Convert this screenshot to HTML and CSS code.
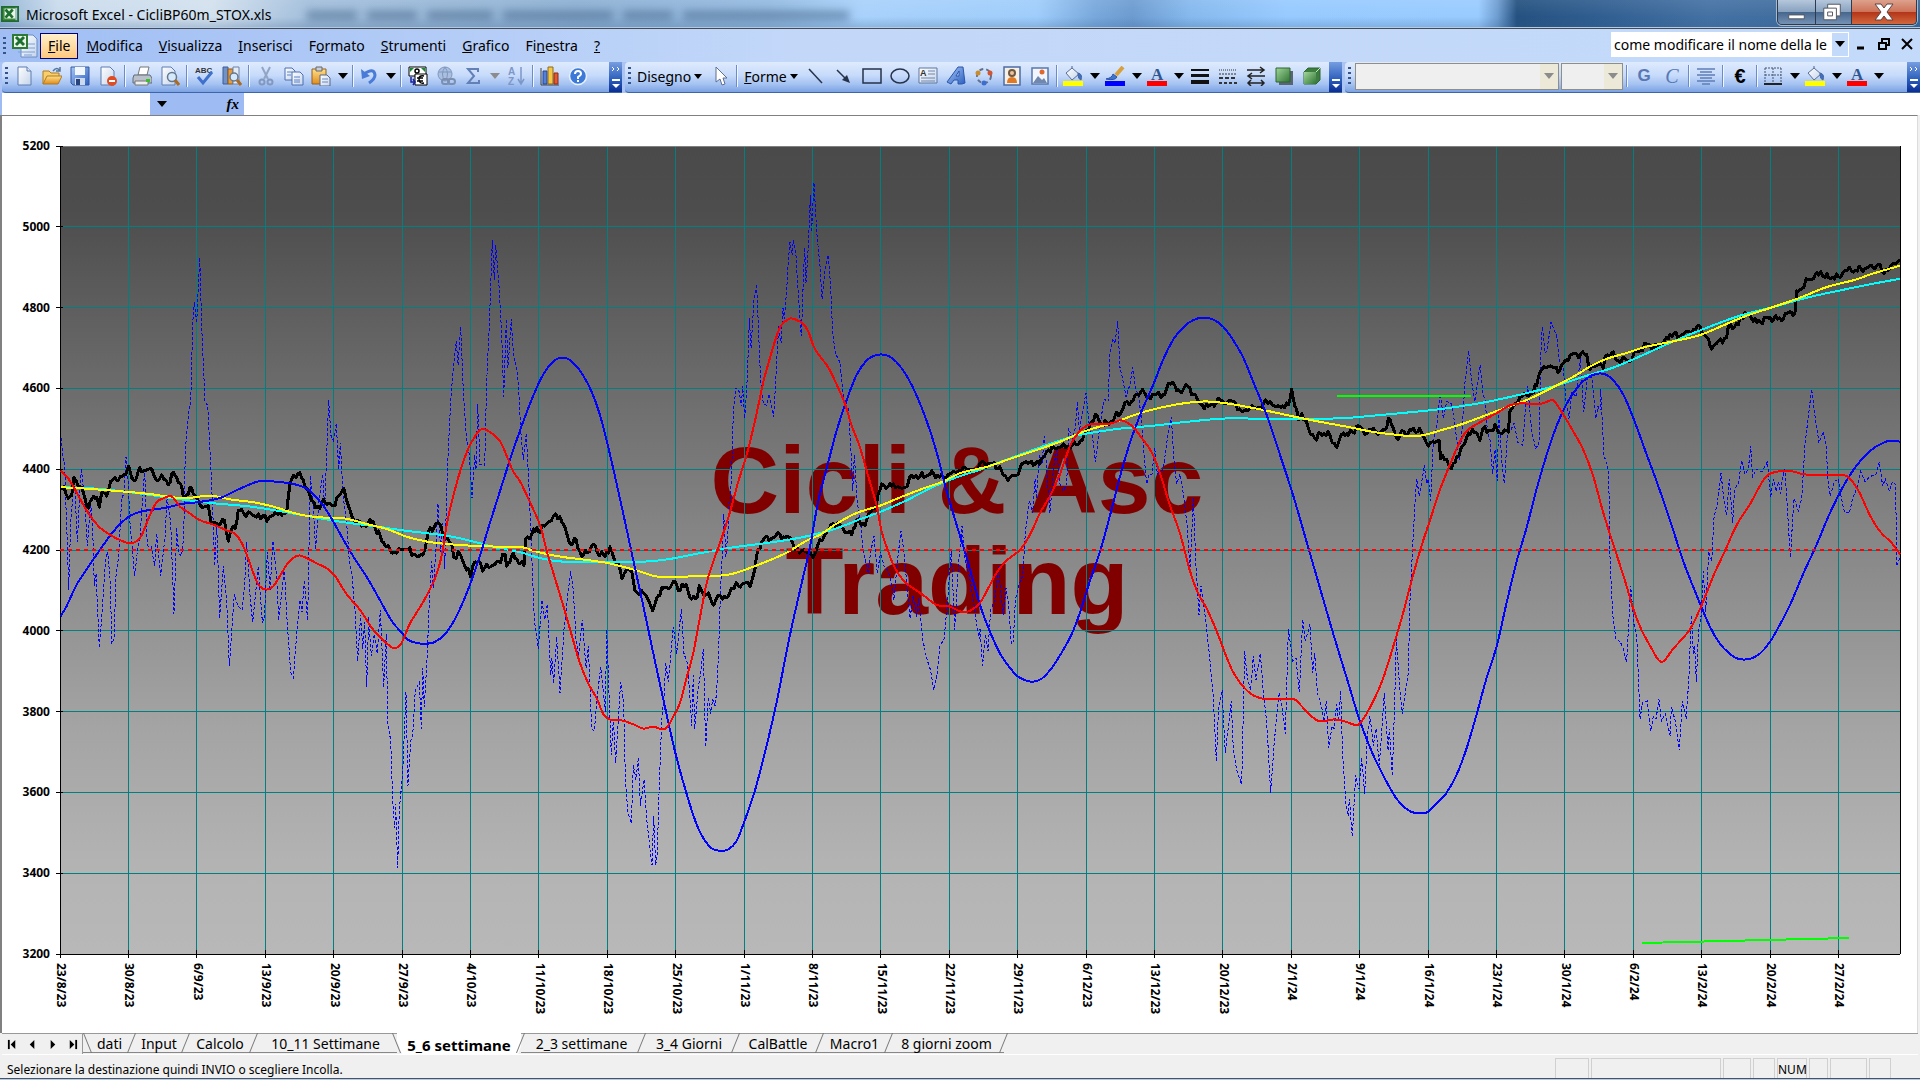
FILE: index.html
```html
<!DOCTYPE html>
<html lang="it">
<head>
<meta charset="utf-8">
<title>Microsoft Excel - CicliBP60m_STOX.xls</title>
<link rel="stylesheet" href="styles.css">
</head>
<body>
<svg class="defs" aria-hidden="true">
  <defs>
    <linearGradient id="paper" x1="0" y1="0" x2="1" y2="1"><stop offset="0" stop-color="#fff"/><stop offset="1" stop-color="#c4d4ea"/></linearGradient>
    <linearGradient id="gold" x1="0" y1="0" x2="0" y2="1"><stop offset="0" stop-color="#ffe08a"/><stop offset="1" stop-color="#e08c1c"/></linearGradient>
    <linearGradient id="blue" x1="0" y1="0" x2="1" y2="1"><stop offset="0" stop-color="#a9c8f6"/><stop offset="1" stop-color="#2c5fc0"/></linearGradient>
    <linearGradient id="green" x1="0" y1="0" x2="1" y2="1"><stop offset="0" stop-color="#a2d69a"/><stop offset="1" stop-color="#2f7434"/></linearGradient>
  </defs>
  <symbol id="i-excel" viewBox="0 0 20 20"><path d="M1 2 16 1v17L1 19z" fill="#3d8a3f"/><path d="M1 2h18v16H1z" fill="none" stroke="#1f6a2c" stroke-width="2"/><path d="M4 4h12v11H4z" fill="#e9f3e6"/><path d="m5 5 8 9M13 5l-8 9" stroke="#1c7030" stroke-width="3"/></symbol>
  <symbol id="i-book" viewBox="0 0 26 26"><path d="M9 2h12l4 4v18H9z" fill="url(#paper)" stroke="#6b8bc0"/><path d="M12 11h11M12 15h11M6 19h17M12 22h8" stroke="#7d9fd8"/><path d="M1 2h14v13H1z" fill="#e9f3e6" stroke="#2c7a35" stroke-width="2"/><path d="m4 4 8 8M12 4l-8 8" stroke="#1c7030" stroke-width="3"/></symbol>
  <symbol id="i-new" viewBox="0 0 20 20"><path d="M4 1h9l4 4v14H4z" fill="url(#paper)" stroke="#5e7cb0"/><path d="M13 1v4h4" fill="#dce8fa" stroke="#5e7cb0"/></symbol>
  <symbol id="i-open" viewBox="0 0 20 20"><path d="M1 18V5h6l2 2h8v4" fill="#f8cf6b" stroke="#b27a1d"/><path d="m1 18 4-8h15l-4 8z" fill="url(#gold)" stroke="#b27a1d"/><path d="M11 5q4-5 7 0m0-4v4h-4" fill="none" stroke="#56779f" stroke-width="1.5"/></symbol>
  <symbol id="i-save" viewBox="0 0 20 20"><path d="M1 1h18v18H3l-2-2z" fill="url(#blue)" stroke="#3459a5"/><path d="M5 1h10v8H5z" fill="#f2f6fd"/><path d="M5 12h10v7H5z" fill="#cdd9ee"/><path d="M6 13h4v6H6z" fill="#29437d"/></symbol>
  <symbol id="i-perm" viewBox="0 0 20 20"><path d="M3 1h9l4 4v14H3z" fill="url(#paper)" stroke="#5e7cb0"/><circle cx="14" cy="15" r="5" fill="#df4b22"/><path d="M11 15h6" stroke="#fff" stroke-width="2"/></symbol>
  <symbol id="i-print" viewBox="0 0 20 20"><path d="M6 9 8 1h9l-2 8z" fill="#fff" stroke="#777"/><path d="M2 9h16l2 3v5H1v-5z" fill="#b9c0ca" stroke="#636b78"/><path d="M3 15h13v4H3z" fill="#eee" stroke="#777"/><path d="M14 13h4v3h-4z" fill="#3bbf30"/></symbol>
  <symbol id="i-preview" viewBox="0 0 20 20"><path d="M2 1h9l4 4v14H2z" fill="url(#paper)" stroke="#5e7cb0"/><circle cx="12" cy="11" r="4.500" fill="#d4e9fb" stroke="#65778d" stroke-width="1.500"/><path d="m15 14 4 5" stroke="#ad6b22" stroke-width="3"/></symbol>
  <symbol id="i-research" viewBox="0 0 20 20"><path d="M1 1h5v17H1z" fill="#6f92cb" stroke="#3c5c96"/><path d="M6 3h5v15H6z" fill="#e69b3c" stroke="#8e5a1b"/><path d="M11 1h6v17h-6z" fill="#e3ebf7" stroke="#6d82a6"/><circle cx="12" cy="11" r="4" fill="#d4e9fb" stroke="#65778d" stroke-width="1.500"/><path d="m15 14 4 5" stroke="#ad6b22" stroke-width="3"/></symbol>
  <symbol id="i-cut" viewBox="0 0 20 20"><path d="m6 1 6 12M14 1 8 13" stroke="#93a5c4" stroke-width="2"/><circle cx="6" cy="16" r="2.500" fill="none" stroke="#8398bf" stroke-width="2"/><circle cx="14" cy="16" r="2.500" fill="none" stroke="#8398bf" stroke-width="2"/></symbol>
  <symbol id="i-copy" viewBox="0 0 20 20"><path d="M1 2h7l3 3v9H1z" fill="url(#paper)" stroke="#4c6eb0"/><path d="M8 6h8l3 3v10H8z" fill="url(#paper)" stroke="#4c6eb0"/><path d="M3 6h5M3 9h4M10 11h6M10 14h6M10 16h6" stroke="#5c82cc"/></symbol>
  <symbol id="i-paste" viewBox="0 0 20 20"><path d="M1 3h14v15H1z" fill="url(#gold)" stroke="#946022"/><path d="M5 1h6v4H5z" fill="#c9ced8" stroke="#666"/><path d="M9 9h7l3 3v8H9z" fill="url(#paper)" stroke="#56688c"/><path d="M11 13h6M11 16h6" stroke="#6a88c4"/></symbol>
  <symbol id="i-undo" viewBox="0 0 20 20"><path d="M5 8q10-7 11 1 0 4-6 8" fill="none" stroke="#4a7bd6" stroke-width="3"/><path d="m2 3 1 10 8-3z" fill="#4a7bd6"/></symbol>
  <symbol id="i-euroconv" viewBox="0 0 20 20"><path d="M1 1h17v9H1z" fill="#fff" stroke="#000"/><path d="M2 2h4L2 6zM17 2h-4l4 4z" fill="#168a30"/><circle cx="9" cy="5" r="2" fill="none" stroke="#000" stroke-width="1.500"/><path d="M7 8h12v11H7z" fill="#fff" stroke="#000"/><path d="M16 10q-5-1-5 3 0 5 5 4M9 12h6M9 15h6" fill="none" stroke="#000" stroke-width="1.500"/><path d="M3 11v5h4m-2-3 2 3-2 3" fill="none" stroke="#1a20a0" stroke-width="1.500"/></symbol>
  <symbol id="i-link" viewBox="0 0 20 20"><circle cx="9" cy="8" r="7" fill="#abc0e0" stroke="#7f97bf"/><path d="M3 6h12M9 1q-5 7 0 14M9 1q5 7 0 14" fill="none" stroke="#7f97bf"/><rect x="6" y="13" width="7" height="5" rx="2.500" fill="none" stroke="#7c8fb0" stroke-width="2"/><rect x="12" y="13" width="7" height="5" rx="2.500" fill="none" stroke="#7c8fb0" stroke-width="2"/></symbol>
  <symbol id="i-sigma" viewBox="0 0 20 20"><path d="M15 6V3H5l6 7-6 7h11v-3" fill="none" stroke="#6280b6" stroke-width="2"/></symbol>
  <symbol id="i-chart" viewBox="0 0 20 20"><path d="M1 2v17h18" stroke="#444" fill="none"/><path d="M3 5h4v13H3z" fill="#5580d8" stroke="#24458f"/><path d="M8 1h5v17H8z" fill="#f3c844" stroke="#93691a"/><path d="M14 7h4v11h-4z" fill="#e05a33" stroke="#8b2a14"/></symbol>
  <symbol id="i-help" viewBox="0 0 20 20"><circle cx="10" cy="10" r="8.500" fill="#3d79d8" stroke="#e8f1fe" stroke-width="1.500"/><path d="M7 8q0-3 3-3t3 3q0 1-3 3v2" fill="none" stroke="#fff" stroke-width="2"/><path d="M9 14h2v2H9z" fill="#fff"/></symbol>
  <symbol id="i-cursor" viewBox="0 0 20 20"><path d="M6 1v15l4-3 2 6 3-1-2-6h4z" fill="#fff" stroke="#5d6f92"/></symbol>
  <symbol id="i-line" viewBox="0 0 20 20"><path d="m3 3 13 14" stroke="#26324a" stroke-width="1.500"/></symbol>
  <symbol id="i-arrow" viewBox="0 0 20 20"><path d="m3 4 9 9" stroke="#26324a" stroke-width="1.500"/><path d="m16 17-8-3 5-5z" fill="#26324a"/></symbol>
  <symbol id="i-rect" viewBox="0 0 20 20"><path d="M1 3h18v14H1z" fill="none" stroke="#26324a" stroke-width="1.500"/></symbol>
  <symbol id="i-ellipse" viewBox="0 0 20 20"><ellipse cx="10" cy="10" rx="9" ry="7" fill="none" stroke="#26324a" stroke-width="1.500"/></symbol>
  <symbol id="i-wordart" viewBox="0 0 20 20"><path d="m1 16 11-15h5l2 16-3 1h-4v-4H8l-3 4zM10 10h3V5z" fill="url(#blue)" stroke="#2a56ad" fill-rule="evenodd"/></symbol>
  <symbol id="i-diagram" viewBox="0 0 20 20"><circle cx="10" cy="10" r="7" fill="none" stroke="#62708b" stroke-width="2" stroke-dasharray="4 3"/><circle cx="4" cy="7" r="2.500" fill="#cb8d27"/><circle cx="16" cy="7" r="2.500" fill="#d6532d"/><circle cx="10" cy="17" r="2.500" fill="#3d6dd0"/></symbol>
  <symbol id="i-clip" viewBox="0 0 20 20"><path d="M2 1h16v18H2z" fill="#f6efe2" stroke="#4e6ca5" stroke-width="1.500"/><circle cx="10" cy="7" r="4" fill="#6d5844"/><circle cx="10" cy="7" r="2" fill="#edc29c"/><path d="M5 17q0-6 5-6t5 6z" fill="#df7926"/></symbol>
  <symbol id="i-picture" viewBox="0 0 20 20"><path d="M2 2h16v16H2z" fill="#f1f6fe" stroke="#5877ad" stroke-width="1.500"/><circle cx="12" cy="6" r="2.500" fill="#dd6930"/><path d="m3 17 5-7 4 4 2-2 3 5z" fill="#7088ad"/></symbol>
  <symbol id="i-fill" viewBox="0 0 20 20"><path d="m3 7 6-5 7 6-7 6z" fill="url(#paper)" stroke="#5a6f94"/><path d="M9 2V0M15 7q5 1 3 7-3-1-3-5z" fill="#3d6fc6" stroke="#49679b"/><path d="M0 15h20v5H0z" fill="#ff0"/></symbol>
  <symbol id="i-brush" viewBox="0 0 20 20"><path d="m18 1-7 8" stroke="#d8a03c" stroke-width="4"/><path d="M1 13q6-1 7-5l4 3q-2 4-11 2z" fill="#3e74d0" stroke="#2c54a0"/><path d="M0 15h20v5H0z" fill="#00f"/></symbol>
  <symbol id="i-weights" viewBox="0 0 20 20"><path d="M1 4h18" stroke="#111" stroke-width="2"/><path d="M1 9.500h18" stroke="#111" stroke-width="3"/><path d="M1 16h18" stroke="#111" stroke-width="4"/></symbol>
  <symbol id="i-dashes" viewBox="0 0 20 20"><path d="M1 4h18" stroke="#333" stroke-dasharray="1 1"/><path d="M1 8h18" stroke="#333" stroke-dasharray="2 1"/><path d="M1 12h18" stroke="#333" stroke-width="2" stroke-dasharray="4 2"/><path d="M1 17h18" stroke="#333" stroke-width="2" stroke-dasharray="3 2"/></symbol>
  <symbol id="i-arrows" viewBox="0 0 20 20"><path d="M1 4h17M2 10h17M2 17h16M14 1l4 3-4 3M6 7l-4 3 4 3M5 14l-3 3 3 3M15 14l3 3-3 3" fill="none" stroke="#222" stroke-width="1.500"/></symbol>
  <symbol id="i-shadow" viewBox="0 0 20 20"><path d="M5 5h14v14H5z" fill="#5a6574"/><path d="M2 2h14v14H2z" fill="url(#green)" stroke="#2c6630"/></symbol>
  <symbol id="i-3d" viewBox="0 0 20 20"><path d="m2 6 4-4h12v12l-4 4H2z" fill="#3d7d3f" stroke="#2c6630"/><path d="M2 6h12v12H2z" fill="url(#green)"/><path d="m14 6 4-4" stroke="#c3e8be"/></symbol>
  <symbol id="i-center" viewBox="0 0 20 20"><path d="M1 3h18M4 6h12M1 9h18M4 12h12M1 15h18M6 18h8" stroke="#5f7db6" stroke-width="1.500"/></symbol>
  <symbol id="i-borders" viewBox="0 0 20 20"><path d="M2 2h16M2 9h16M2 2v16M10 2v16M18 2v16" stroke="#44536e" stroke-dasharray="2 1"/><path d="M1 18h18" stroke="#222" stroke-width="2"/></symbol>
</svg>

<header class="titlebar">
  <svg class="app-icon"><use href="#i-excel"/></svg>
  <h1 class="title">Microsoft Excel - CicliBP60m_STOX.xls</h1>
  <div class="ghost" aria-hidden="true"><i></i><i></i><i></i><i></i><i></i><i></i></div>
  <div class="window-buttons">
    <button aria-label="Riduci a icona"><svg viewBox="0 0 38 25"><path d="M11 15h16v4H11z" fill="#fff" stroke="#53565f"/></svg></button>
    <button aria-label="Ripristina"><svg viewBox="0 0 36 25"><path d="M12 4h13v12h-4v4H8V8h4z" fill="#fff" stroke="#53565f"/><path d="M12 12h5v4h-5zM12 8h9v8" fill="none" stroke="#53565f"/></svg></button>
    <button class="close" aria-label="Chiudi"><svg viewBox="0 0 64 25"><path d="M23 4h6l3 4 3-4h6l-6 8 6 8h-6l-3-4-3 4h-6l6-8z" fill="#fff" stroke="#5b4444"/></svg></button>
  </div>
</header>

<nav class="menubar" aria-label="Menu">
  <span class="grip"></span>
  <svg class="book-icon"><use href="#i-book"/></svg>
  <button class="menu menu-active"><u>F</u>ile</button>
  <button class="menu"><u>M</u>odifica</button>
  <button class="menu"><u>V</u>isualizza</button>
  <button class="menu"><u>I</u>nserisci</button>
  <button class="menu">F<u>o</u>rmato</button>
  <button class="menu"><u>S</u>trumenti</button>
  <button class="menu"><u>G</u>rafico</button>
  <button class="menu">Fi<u>n</u>estra</button>
  <button class="menu"><u>?</u></button>
  <div class="question">
    <input type="text" aria-label="Digitare una domanda" value="come modificare il nome della le">
    <button aria-label="Domande recenti"><span class="caret"></span></button>
  </div>
  <div class="doc-buttons">
    <button aria-label="Riduci finestra"><svg viewBox="0 0 12 12"><path d="M2 10h7" stroke="#000" stroke-width="3"/></svg></button>
    <button aria-label="Ripristina finestra"><svg viewBox="0 0 12 12"><path d="M4 4V1h7v6H8" fill="none" stroke="#000" stroke-width="2"/><path d="M1 5h7v6H1z" fill="none" stroke="#000" stroke-width="2"/></svg></button>
    <button aria-label="Chiudi finestra"><svg viewBox="0 0 12 12"><path d="m1 1 10 10M11 1 1 11" stroke="#000" stroke-width="2"/></svg></button>
  </div>
</nav>

<div class="toolbars">
  <div class="toolbar toolbar-standard" role="toolbar" aria-label="Standard">
    <span class="grip"></span>
    <button class="tool" aria-label="Nuovo"><svg><use href="#i-new"/></svg></button>
    <button class="tool" aria-label="Apri"><svg><use href="#i-open"/></svg></button>
    <button class="tool" aria-label="Salva"><svg><use href="#i-save"/></svg></button>
    <button class="tool" aria-label="Autorizzazioni"><svg><use href="#i-perm"/></svg></button>
    <span class="sep"></span>
    <button class="tool" aria-label="Stampa"><svg><use href="#i-print"/></svg></button>
    <button class="tool" aria-label="Anteprima di stampa"><svg><use href="#i-preview"/></svg></button>
    <span class="sep"></span>
    <button class="tool" aria-label="Controllo ortografia"><svg viewBox="0 0 20 20"><text class="abc" x="1" y="7">ABC</text><path d="m4 11 5 6 9-11" fill="none" stroke="#3e70cc" stroke-width="3"/></svg></button>
    <button class="tool" aria-label="Ricerche"><svg><use href="#i-research"/></svg></button>
    <span class="sep"></span>
    <button class="tool" aria-label="Taglia"><svg><use href="#i-cut"/></svg></button>
    <button class="tool" aria-label="Copia"><svg><use href="#i-copy"/></svg></button>
    <button class="tool split" aria-label="Incolla"><svg><use href="#i-paste"/></svg><span class="caret"></span></button>
    <span class="sep"></span>
    <button class="tool split" aria-label="Annulla"><svg><use href="#i-undo"/></svg><span class="caret"></span></button>
    <span class="sep"></span>
    <button class="tool" aria-label="Conversione in euro"><svg><use href="#i-euroconv"/></svg></button>
    <button class="tool" aria-label="Collegamento ipertestuale"><svg><use href="#i-link"/></svg></button>
    <button class="tool split" aria-label="Somma automatica"><svg><use href="#i-sigma"/></svg><span class="caret caret-dim"></span></button>
    <button class="tool" aria-label="Ordinamento crescente"><svg viewBox="0 0 20 20"><text class="az" x="2" y="9">A</text><text class="az" x="2" y="19">Z</text><path d="M15 1v16m-3-4 3 5 3-5" fill="none" stroke="#7d97c8" stroke-width="1.5"/></svg></button>
    <span class="sep"></span>
    <button class="tool" aria-label="Creazione guidata grafico"><svg><use href="#i-chart"/></svg></button>
    <button class="tool" aria-label="Guida"><svg><use href="#i-help"/></svg></button>
    <button class="overflow" aria-label="Opzioni barra Standard"><svg viewBox="0 0 13 30"><path d="m3 5 2 2-2 2m5-4 2 2-2 2" fill="none" stroke="#fff"/><path d="M3 18h8" stroke="#fff" stroke-width="2"/><path d="M3 22h8l-4 4z" fill="#fff"/></svg></button>
  </div>
  <div class="toolbar toolbar-drawing" role="toolbar" aria-label="Disegno">
    <span class="grip"></span>
    <button class="label-tool"><span>Dise<u>g</u>no</span><span class="caret caret-small"></span></button>
    <button class="tool" aria-label="Seleziona oggetti"><svg><use href="#i-cursor"/></svg></button>
    <span class="sep"></span>
    <button class="label-tool"><span><u>F</u>orme</span><span class="caret caret-small"></span></button>
    <button class="tool" aria-label="Linea"><svg><use href="#i-line"/></svg></button>
    <button class="tool" aria-label="Freccia"><svg><use href="#i-arrow"/></svg></button>
    <button class="tool" aria-label="Rettangolo"><svg><use href="#i-rect"/></svg></button>
    <button class="tool" aria-label="Ovale"><svg><use href="#i-ellipse"/></svg></button>
    <button class="tool" aria-label="Casella di testo"><svg viewBox="0 0 20 20"><path d="M1 2h18v15H1z" fill="url(#paper)" stroke="#60769f"/><text class="box-a" x="2" y="10">A</text><path d="M10 5h7M10 8h7M3 12h14M3 15h14" stroke="#7185ab"/></svg></button>
    <button class="tool" aria-label="Inserisci WordArt"><svg><use href="#i-wordart"/></svg></button>
    <button class="tool" aria-label="Inserisci diagramma"><svg><use href="#i-diagram"/></svg></button>
    <button class="tool" aria-label="Inserisci ClipArt"><svg><use href="#i-clip"/></svg></button>
    <button class="tool" aria-label="Inserisci immagine"><svg><use href="#i-picture"/></svg></button>
    <span class="sep"></span>
    <button class="tool split" aria-label="Colore riempimento"><svg><use href="#i-fill"/></svg><span class="caret"></span></button>
    <button class="tool split" aria-label="Colore linea"><svg><use href="#i-brush"/></svg><span class="caret"></span></button>
    <button class="tool split" aria-label="Colore carattere"><svg viewBox="0 0 20 20"><text class="font-a" x="4" y="14">A</text><path d="M0 15h20v5H0z" fill="red"/></svg><span class="caret"></span></button>
    <button class="tool" aria-label="Stile linea"><svg><use href="#i-weights"/></svg></button>
    <button class="tool" aria-label="Stile tratteggio"><svg><use href="#i-dashes"/></svg></button>
    <button class="tool" aria-label="Stile freccia"><svg><use href="#i-arrows"/></svg></button>
    <button class="tool" aria-label="Stile ombreggiatura"><svg><use href="#i-shadow"/></svg></button>
    <button class="tool" aria-label="Stile 3D"><svg><use href="#i-3d"/></svg></button>
    <button class="overflow" aria-label="Opzioni barra Disegno"><svg viewBox="0 0 13 30"><path d="M3 18h8" stroke="#fff" stroke-width="2"/><path d="M3 22h8l-4 4z" fill="#fff"/></svg></button>
  </div>
  <div class="toolbar toolbar-format" role="toolbar" aria-label="Formattazione">
    <span class="grip"></span>
    <span class="combo combo-font"><select aria-label="Tipo di carattere" disabled></select><span class="combo-arrow"><span class="caret caret-dim"></span></span></span>
    <span class="combo combo-size"><select aria-label="Dimensione carattere" disabled></select><span class="combo-arrow"><span class="caret caret-dim"></span></span></span>
    <span class="sep"></span>
    <button class="tool letter" aria-label="Grassetto">G</button>
    <button class="tool letter italic" aria-label="Corsivo">C</button>
    <span class="sep"></span>
    <button class="tool" aria-label="Allinea al centro"><svg><use href="#i-center"/></svg></button>
    <span class="sep"></span>
    <button class="tool letter euro" aria-label="Euro">€</button>
    <span class="sep"></span>
    <button class="tool split" aria-label="Bordi"><svg><use href="#i-borders"/></svg><span class="caret"></span></button>
    <button class="tool split" aria-label="Colore riempimento celle"><svg><use href="#i-fill"/></svg><span class="caret"></span></button>
    <button class="tool split" aria-label="Colore testo"><svg viewBox="0 0 20 20"><text class="font-a" x="4" y="14">A</text><path d="M0 15h20v5H0z" fill="red"/></svg><span class="caret"></span></button>
    <button class="overflow" aria-label="Opzioni barra Formattazione"><svg viewBox="0 0 13 30"><path d="m3 5 2 2-2 2m5-4 2 2-2 2" fill="none" stroke="#fff"/><path d="M3 18h8" stroke="#fff" stroke-width="2"/><path d="M3 22h8l-4 4z" fill="#fff"/></svg></button>
  </div>
</div>

<div class="formula-bar">
  <input class="name-box" type="text" aria-label="Casella nome">
  <button class="name-arrow" aria-label="Elenco nomi"><span class="caret"></span></button>
  <button class="fx" aria-label="Inserisci funzione">fx</button>
  <input class="formula" type="text" aria-label="Barra della formula">
</div>

<main class="chart">
  <ol class="y-labels">
    <li>5200</li><li>5000</li><li>4800</li><li>4600</li><li>4400</li><li>4200</li><li>4000</li><li>3800</li><li>3600</li><li>3400</li><li>3200</li>
  </ol>
  <div class="plot">
    <p class="watermark">Cicli &amp; Asc<br>Trading</p>
    <svg class="series" id="series" viewBox="0 0 1840 808" preserveAspectRatio="none" role="img" aria-label="Cicli EuroStoxx 60 minuti"></svg>
  </div>
  <ol class="x-labels">
    <li><span>23/8/23</span></li><li><span>30/8/23</span></li><li><span>6/9/23</span></li><li><span>13/9/23</span></li><li><span>20/9/23</span></li><li><span>27/9/23</span></li><li><span>4/10/23</span></li><li><span>11/10/23</span></li><li><span>18/10/23</span></li><li><span>25/10/23</span></li><li><span>1/11/23</span></li><li><span>8/11/23</span></li><li><span>15/11/23</span></li><li><span>22/11/23</span></li><li><span>29/11/23</span></li><li><span>6/12/23</span></li><li><span>13/12/23</span></li><li><span>20/12/23</span></li><li><span>2/1/24</span></li><li><span>9/1/24</span></li><li><span>16/1/24</span></li><li><span>23/1/24</span></li><li><span>30/1/24</span></li><li><span>6/2/24</span></li><li><span>13/2/24</span></li><li><span>20/2/24</span></li><li><span>27/2/24</span></li>
  </ol>
</main>

<nav class="sheets" aria-label="Fogli">
  <div class="sheet-nav">
    <button aria-label="Primo foglio"><svg viewBox="0 0 12 12"><path d="M2 1v10" stroke="#000" stroke-width="2"/><path d="M9 1v10L4 6z"/></svg></button>
    <button aria-label="Foglio precedente"><svg viewBox="0 0 12 12"><path d="M8 1v10L3 6z"/></svg></button>
    <button aria-label="Foglio successivo"><svg viewBox="0 0 12 12"><path d="M4 1v10l5-5z"/></svg></button>
    <button aria-label="Ultimo foglio"><svg viewBox="0 0 12 12"><path d="M10 1v10" stroke="#000" stroke-width="2"/><path d="M3 1v10l5-5z"/></svg></button>
  </div>
  <div class="tabs">
    <button class="tab tab-first">dati</button>
    <button class="tab">Input</button>
    <button class="tab">Calcolo</button>
    <button class="tab tab-before">10_11 Settimane</button>
    <button class="tab tab-active">5_6 settimane</button>
    <button class="tab">2_3 settimane</button>
    <button class="tab">3_4 Giorni</button>
    <button class="tab">CalBattle</button>
    <button class="tab">Macro1</button>
    <button class="tab">8 giorni zoom</button>
  </div>
</nav>

<footer class="status">
  <span class="status-text">Selezionare la destinazione quindi INVIO o scegliere Incolla.</span>
  <div class="panels"><span></span><span></span><span></span><span></span><span>NUM</span><span></span><span></span><span></span></div>
</footer>
<div class="taskbar"></div>
<script src="chart.js"></script>
</body>
</html>
```

FILE: styles.css
```css
* { box-sizing: border-box; }
body {
  margin: 0;
  min-height: 100vh;
  display: flex;
  flex-direction: column;
  background: #f0f0f0;
  color: #000;
  font-family: "Noto Sans", "Liberation Sans", sans-serif;
  font-size: 14px;
  overflow-x: hidden;
}
button, input, select { font: inherit; color: inherit; margin: 0; padding: 0; border: 0; background: none; border-radius: 0; }
button { display: flex; align-items: center; justify-content: center; }
ol { list-style: none; margin: 0; padding: 0; }
.defs { position: absolute; width: 0; height: 0; }

/* Title bar */
.titlebar {
  display: flex;
  align-items: flex-start;
  height: 29px;
  padding: 0 3px 0 1px;
  border-bottom: 1px solid #444b55;
  box-shadow: inset 0 -1px #b5cbe2;
  background:
    linear-gradient(rgba(255,255,255,.08), rgba(255,255,255,0) 60%, rgba(50,90,140,.25)),
    linear-gradient(90deg, #93b4d6 0, #c9dbec 3%, #d3e1ee 11%, #a3bfdc 16%, #8db0d3 30%, #93bae0 40%, #a8d1fb 45%, #9fcdfb 54%, #78a8dc 57%, #6c9bd0 59%, #86b9ee 62%, #97caff 67%, #99cbff 77%, #6d9cd0 78%, #245180 79%, #2f5d8f 83%, #4471a3 89%, #3a6798 100%);
}
.app-icon { width: 18px; height: 20px; margin-top: 4px; }
.title { margin: 0 0 0 7px; font-size: 14px; font-weight: 400; line-height: 29px; white-space: nowrap; }
.ghost { display: flex; gap: 10px; margin: 11px 0 0 36px; filter: blur(4px); }
.ghost i { height: 9px; background: #47688c; opacity: .6; }
.ghost i:nth-child(1) { width: 50px; }
.ghost i:nth-child(2) { width: 50px; }
.ghost i:nth-child(3) { width: 66px; }
.ghost i:nth-child(4) { width: 110px; }
.ghost i:nth-child(5) { width: 50px; }
.ghost i:nth-child(6) { width: 166px; }
.window-buttons { display: flex; height: 25px; margin-left: auto; border: 1px solid #2d3b4c; border-top: 0; border-radius: 0 0 5px 5px; overflow: hidden; box-shadow: 0 0 0 1px #a5bad0; }
.window-buttons button { width: 38px; background: linear-gradient(#b5c7db, #89a3c0 48%, #46658c 50%, #7592b4); border-right: 1px solid #2d3b4c; }
.window-buttons button + button { width: 36px; }
.window-buttons .close { width: 64px; border: 0; background: linear-gradient(#dda18c, #cd7359 48%, #b23418 50%, #d2673d); }
.window-buttons svg { width: 100%; height: 25px; }

/* Menu bar */
.menubar { display: flex; align-items: center; height: 33px; padding: 0 7px 0 3px; background: linear-gradient(90deg, #a0bef4, #c3d8f9 42%, #c4dafa); }
.grip { width: 3px; height: 18px; flex: none; background: repeating-linear-gradient(#35548c 0 2px, transparent 2px 5px); }
.book-icon { width: 26px; height: 26px; margin: 0 2px 0 6px; }
.menu { height: 26px; padding: 0 8px; white-space: nowrap; }
.menu-active { border: 1px solid #000080; padding: 0 7px; background: linear-gradient(#fff0ca, #ffc87e); }
.question { display: flex; width: 238px; height: 25px; margin: 0 0 3px auto; border: 1px solid #fff; background: #fff; }
.question input { flex: 1; min-width: 0; padding-left: 2px; }
.question button { width: 16px; background: #c4dafa; }
.doc-buttons { display: flex; gap: 11px; margin: 0 0 3px 6px; }
.doc-buttons svg { width: 12px; height: 12px; }

/* Toolbars */
.toolbars { display: grid; grid-template-columns: 620px 717px 1fr; gap: 3px; height: 31px; padding-left: 2px; background: #a9c4f5; }
.toolbar { display: flex; align-items: center; min-width: 0; padding: 0 0 2px 3px; border-bottom: 1px solid #3c65aa; border-radius: 4px 0 0 4px; background: linear-gradient(#dfebfd, #c6dafa 45%, #a3c1f1 75%, #7ba2e3); }
.toolbar .grip { margin-right: 2px; }
.toolbar-format .grip { margin-right: 4px; }
.tool { width: 28px; height: 26px; flex: none; }
.tool svg { width: 20px; height: 20px; flex: none; }
.split { width: 42px; gap: 7px; justify-content: flex-start; padding-left: 3px; }
.sep { width: 6px; height: 22px; flex: none; background: linear-gradient(90deg, transparent 2px, #6a8ccb 2px 3px, #f2f7ff 3px 4px, transparent 4px); }
.caret { width: 0; height: 0; flex: none; border: 5px solid transparent; border-top: 6px solid #000; border-bottom: 0; }
.caret-small { border-width: 4px; border-top-width: 5px; border-bottom: 0; }
.caret-dim { border-top-color: #8c8c8c; }
.label-tool { flex: none; gap: 3px; height: 26px; padding: 0 4px; }
.abc { font: 700 8px "Liberation Sans", sans-serif; fill: #333; }
.az { font: 700 10px "Liberation Sans", sans-serif; fill: #7d97c8; }
.box-a { font: 700 9px "Liberation Sans", sans-serif; fill: #333; }
.font-a { font: 700 17px "Liberation Serif", serif; fill: #31568f; }
.tool svg:has(.font-a) { overflow: visible; }
.overflow { width: 13px; height: 30px; margin: 0 0 -2px auto; flex: none; background: linear-gradient(#769de0, #2a5dbb 60%, #0a2f93); }
.overflow svg { width: 13px; height: 30px; }
.combo { display: flex; height: 27px; flex: none; border: 1px solid #8f8f88; background: #efefef; }
.combo select { flex: 1; min-width: 0; appearance: none; }
.combo-arrow { display: flex; align-items: center; justify-content: center; width: 18px; background: #ece9d8; }
.combo-font { width: 204px; }
.combo-size { width: 62px; margin: 0 1px 0 2px; }
.letter { font-family: "Liberation Sans", sans-serif; font-size: 17px; font-weight: 700; color: #5878b4; }
.italic { font-family: "Liberation Serif", serif; font-style: italic; font-size: 20px; font-weight: 400; }
.euro { color: #000; font-size: 20px; }

/* Formula bar */
.formula-bar { display: flex; height: 22px; padding-left: 2px; background: #9ebcf3; }
.name-box { width: 148px; background: #fff; }
.name-arrow { width: 24px; }
.fx { width: 70px; justify-content: flex-end; padding-right: 5px; font-family: "Liberation Serif", serif; font-style: italic; font-weight: 700; font-size: 15px; }
.formula { flex: 1; min-width: 0; background: #fff; }

/* Chart sheet */
.chart {
  flex: 1;
  display: grid;
  grid-template-columns: 58px 1fr 17px;
  grid-template-rows: 30px 1fr 79px;
  margin-right: 2px;
  border: solid #808080;
  border-width: 1px 1px 0 2px;
  border-right-color: #dcdcdc;
  background: #fff;
}
.y-labels { grid-area: 2 / 1; display: flex; flex-direction: column; justify-content: space-between; padding-right: 10px; text-align: right; font-size: 12px; font-weight: 700; }
.y-labels li { height: 0; line-height: 0; }
.plot { grid-area: 2 / 2; display: grid; min-height: 0; background: linear-gradient(#4a4a4a, #4d4d4d 8%, #5e5e5e 20%, #888 50%, #a4a4a4 72%, #b4b4b4 90%, #b8b8b8); }
.watermark { grid-area: 1 / 1; place-self: center; margin: 0; padding: 0 46px 38px 0; color: #800000; font-family: "Liberation Sans", sans-serif; font-size: 95px; font-weight: 700; line-height: 101px; text-align: center; }
.series { grid-area: 1 / 1; width: 100%; height: 100%; min-height: 0; overflow: visible; }
.series * { fill: none; vector-effect: non-scaling-stroke; shape-rendering: crispEdges; }
.grid-line { stroke: #008080; }
.axis { stroke: #000; }
.frame-top { stroke: #808080; }
.series .level { stroke: #f00; stroke-width: 2px; stroke-dasharray: 4 4; shape-rendering: auto; }
.oscillator { stroke: #00f; stroke-width: 1px; stroke-dasharray: 3 2; }
.price { stroke: #000; stroke-width: 3px; stroke-linejoin: round; }
.slow { stroke: #0ff; stroke-width: 2px; }
.fast { stroke: #ff0; stroke-width: 2px; }
.cycle { stroke: #00f; stroke-width: 2px; }
.momentum { stroke: #f00; stroke-width: 2px; }
.target { stroke: #0f0; stroke-width: 2px; }
.x-labels { grid-area: 3 / 2; justify-self: start; display: flex; width: 100%; margin-left: -8px; padding-top: 9px; font-size: 12px; font-weight: 700; }
.x-labels li { flex: 0 0 3.7175%; }
.x-labels span { writing-mode: vertical-rl; line-height: 18px; }

/* Sheet tabs */
.sheets { display: flex; height: 22px; margin: 0 2px; border-bottom: 1px solid #fff; }
.sheet-nav { display: flex; width: 81px; flex: none; border-top: 1px solid #999; border-right: 1px solid #999; }
.sheet-nav button { width: 20px; }
.sheet-nav svg { width: 11px; height: 11px; }
.tabs { flex: 1; display: grid; grid-template-columns: 49px 54px 68px 143px 124px 121px 94px 84px 69px 115px; background: linear-gradient(#999 0 1px, transparent 1px); }
.tab { position: relative; height: 20px; padding-top: 2px; border-bottom: 1px solid #888; white-space: nowrap; }
.tab::after { content: ""; position: absolute; top: 0; right: 0; width: 1px; height: 20px; background: #777; transform: skewX(-22deg); }
.tab-first::before { content: ""; position: absolute; top: 0; left: 4px; width: 1px; height: 20px; background: #777; transform: skewX(22deg); }
.tab-first { padding-left: 4px; }
.tab-before::after { transform: skewX(22deg); }
.tab-active { height: 21px; border-bottom: 0; background: #fff; clip-path: polygon(-3px 0, 129px 0, 121px 100%, 5px 100%); font-size: 15px; font-weight: 700; }

/* Status bar */
.status { display: flex; align-items: flex-end; height: 23px; padding-left: 7px; font-size: 12px; }
.status-text { line-height: 16px; }
.panels { display: grid; grid-template-columns: 34px 130px 28px 22px 30px 19px 37px 22px; gap: 2px; height: 20px; margin: 0 29px 0 auto; }
.panels span { padding-top: 3px; border: 1px solid #d0d0d0; border-bottom: 0; line-height: 16px; text-align: center; }
.taskbar { height: 2px; border-top: 1px solid #44546a; background: #b9cbe0; }
```

FILE: chart.js
```js
// Series samples, one string per panel of 480 units. x runs in thirds of a unit
// from the panel's start, y from 13 (5200) down to 1680 (3200).
const PANELS = [-20, 440, 900, 1380];
const Y_STEP = 2.063;

const DATA = {
  oscillator: [
    "64,615 68,655 74,670 78,760 82,830 86,928 92,790 98,740 103,695 112,830 118,745 124,678 134,745 142,838 152,750 158,800 163,920 168,895 178,1048 188,960 196,870 203,850 210,905 216,1040 222,1030 228,900 236,860 245,740 252,730 258,655 264,700 270,790 284,900 292,850 300,820 308,740 314,682 322,838 334,840 344,880 350,812 362,900 375,820 381,738 392,790 402,978 410,800 416,855 425,858 431,820 436,640 448,548 452,545 458,380 463,335 470,378 479,243 486,400 495,540 503,548 510,640 518,760 524,880 530,790 539,988 550,880 560,950 568,1085 583,938 594,962 606,970 614,920 620,830 630,940 638,995 655,880 667,995 673,988 682,850 690,930 699,828 710,900 716,992 733,885 742,1000 752,1098 760,1110 770,1020 780,950 786,975 793,908 803,992 811,693 820,760 827,845 836,750 848,690 854,760 866,538 873,610 880,620 889,585 896,680 901,625 910,740 920,790 928,870 936,900 945,970 953,1075 962,980 968,1050 974,995 980,1130 986,985 994,1065 1003,1020 1012,1060 1021,970 1031,1130 1039,1020 1043,1200 1052,1240 1058,1360 1064,1420 1067,1370 1073,1503 1078,1380 1088,1310 1098,1140 1104,1333 1112,1240 1118,1230 1126,1135 1138,1120 1144,1215 1148,1090 1153,1170 1162,1060 1168,950 1175,870 1180,925 1188,840 1194,750 1202,850 1208,790 1214,885 1222,680 1232,540 1240,470 1249,415 1254,465 1262,385 1270,520 1280,620 1288,650 1296,740 1304,650 1308,680 1313,545 1320,670 1334,672 1340,500 1348,380 1357,208 1363,290 1367,218 1376,290 1385,400 1391,530 1399,370 1404,470 1414,370 1420,440 1432,480 1438,535",
    "62,600 70,660 79,605 88,730 96,870 103,990 115,1050 126,950 134,990 142,958 152,1105 156,1070 161,1122 170,1025 180,1142 192,1010 205,930 212,890 220,930 228,1030 236,1065 247,990 258,1090 265,1045 275,1215 283,1220 290,1160 302,1088 316,1180 320,1010 334,1270 340,1195 347,1285 362,1118 371,1160 376,1320 384,1390 394,1410 400,1290 408,1320 415,1275 421,1375 432,1320 440,1400 450,1465 456,1497 461,1395 467,1497 472,1470 477,1350 485,1200 492,1150 497,1080 505,1118 514,1050 520,1005 530,1060 544,968 552,1060 562,1080 568,1130 575,1210 580,1105 584,1215 595,1130 602,1100 610,1050 617,1253 625,1150 632,1185 638,1155 645,1168 650,1140 656,1050 662,920 668,840 671,772 678,860 688,770 695,690 700,560 708,512 718,520 724,550 728,508 734,575 742,490 748,368 753,430 762,330 770,298 776,400 782,500 790,545 800,548 808,525 821,572 830,460 836,385 843,420 849,348 853,370 860,310 866,240 870,212 876,238 880,208 888,240 896,330 904,405 910,290 914,222 918,295 925,220 931,115 935,190 942,88 950,190 960,260 966,328 975,270 984,238 992,300 998,400 1006,440 1020,460 1032,540 1045,555 1052,630 1058,725 1063,650 1072,750 1082,790 1088,840 1095,865 1104,895 1112,850 1122,818 1132,895 1142,850 1152,880 1160,885 1170,900 1182,950 1192,870 1203,808 1212,850 1222,930 1230,988 1240,940 1250,985 1256,945 1268,1030 1280,1070 1292,1095 1301,1135 1312,1100 1320,1045 1332,1030 1342,960 1354,845 1364,1012 1375,880 1386,797 1396,870 1408,900 1418,940 1430,1000 1438,1030",
    "60,1010 68,1085 76,1020 84,1055 92,970 104,950 115,880 122,930 130,980 138,925 146,960 154,1040 160,1035 166,950 176,920 188,900 196,810 208,745 218,770 225,700 229,740 238,650 246,670 253,612 262,700 270,770 280,680 290,640 300,710 310,725 320,710 327,595 336,620 346,595 352,540 358,600 368,560 378,522 388,590 398,615 406,665 418,600 432,535 444,540 450,440 458,410 465,420 473,375 480,470 490,500 498,530 510,505 518,470 526,510 536,530 545,580 552,650 560,710 568,690 576,690 584,635 592,690 600,685 610,680 620,625 634,572 642,660 650,710 660,690 672,740 682,800 690,890 700,738 708,880 717,980 723,920 735,980 748,1060 760,1150 769,1283 776,1170 786,1135 796,1265 814,1158 820,1260 830,1300 845,1330 854,1055 862,1110 872,1135 880,1065 888,1115 901,1060 910,1140 920,1200 932,1348 942,1250 950,1190 958,1140 968,1180 976,1225 985,1010 998,1075 1008,1070 1018,1140 1028,990 1036,1035 1050,1000 1058,1100 1064,1060 1072,1140 1085,1170 1092,1200 1099,1158 1106,1255 1116,1210 1122,1215 1130,1165 1136,1200 1142,1137 1148,1270 1158,1370 1165,1395 1168,1360 1177,1438 1187,1310 1197,1340 1205,1275 1214,1350 1222,1230 1230,1190 1240,1250 1248,1215 1258,1290 1266,1210 1273,1142 1284,1260 1288,1215 1297,1313 1304,1160 1309,1030 1318,1120 1327,1185 1336,1140 1345,1100 1350,950 1358,840 1364,760 1370,700 1378,735 1393,672 1400,710 1405,700 1412,745 1420,620 1430,590 1440,530",
    "3,535 10,575 20,540 35,545 45,590 58,662 66,600 75,500 86,437 95,500 105,540 120,465 128,520 136,540 142,600 150,620 158,690 165,640 172,705 176,565 185,660 193,710 202,610 212,600 222,585 234,625 248,630 256,560 263,508 275,600 287,638 297,625 302,450 307,385 315,440 321,435 333,377 350,405 358,460 370,470 378,540 387,575 396,520 408,530 421,450 431,562 442,490 455,490 468,575 474,550 480,560 482,515 492,650 506,685 510,860 518,980 528,1030 540,1035 550,1050 560,1078 572,920 582,1000 590,1020 600,1195 608,1160 622,1158 632,1220 640,1190 648,1195 657,1155 664,1200 676,1185 684,1210 691,1230 694,1170 706,1200 718,1260 727,1158 738,1195 746,1120 754,980 760,1060 764,1045 769,1118 776,1010 784,980 790,890 797,975 806,850 815,870 822,780 832,750 843,688 852,745 860,775 868,700 878,790 884,720 895,710 905,662 915,690 925,680 932,632 938,695 950,680 966,685 982,665 992,738 1000,700 1008,725 1016,705 1022,730 1028,695 1035,680 1043,770 1051,862 1062,740 1075,765 1085,740 1095,630 1105,570 1115,515 1125,570 1137,625 1150,602 1158,630 1164,700 1170,735 1184,705 1195,700 1204,740 1214,770 1228,770 1238,740 1250,720 1262,685 1275,705 1290,695 1308,690 1318,665 1328,715 1336,700 1348,725 1358,705 1367,712 1370,880 1380,862"
  ],
  price: [
    "62,722 72,716 85,740 95,735 102,697 115,715 125,718 135,740 145,760 155,742 170,738 178,758 185,728 200,735 212,705 225,697 235,703 248,694 258,690 266,674 275,697 285,704 295,682 305,685 325,680 337,682 347,700 360,698 378,702 385,712 395,690 405,692 420,708 430,738 440,732 455,719 470,740 482,755 505,755 513,790 525,790 540,795 553,785 565,828 572,808 585,802 595,764 605,763 612,772 625,768 640,775 655,772 662,782 670,775 685,782 700,775 708,765 725,775 740,768 750,710 760,692 775,688 785,698 800,720 815,745 840,760 850,742 865,750 880,755 895,735 912,720 925,755 940,782 965,797 985,792 1000,788 1010,812 1020,815 1035,838 1050,848 1070,853 1090,845 1105,845 1120,855 1135,860 1155,845 1165,808 1195,790 1215,820 1235,835 1242,862 1255,850 1275,880 1285,885 1292,902 1300,875 1318,870 1328,890 1340,876 1360,878 1375,870 1395,855 1400,880 1415,858 1430,865 1440,875",
    "72,878 78,822 95,815 110,800 120,810 140,792 160,777 180,778 195,800 212,835 228,825 245,860 262,852 280,835 292,852 305,850 315,860 330,840 345,870 355,875 366,905 385,885 395,890 405,930 430,935 445,950 458,972 475,940 490,925 510,925 525,912 535,930 558,918 575,948 592,943 598,920 612,940 625,935 642,960 655,940 680,945 695,925 715,920 733,915 750,922 765,885 775,845 790,825 815,822 840,815 855,825 870,820 885,845 905,848 925,852 945,855 960,825 980,810 1000,792 1020,795 1035,810 1055,815 1070,785 1085,795 1100,785 1110,770 1130,750 1145,710 1165,715 1180,710 1200,718 1222,715 1235,692 1260,695 1290,690 1330,695 1360,685 1400,680 1425,682 1440,668",
    "60,668 90,668 120,675 130,692 150,697 170,692 185,668 210,665 220,672 250,655 265,640 300,635 335,632 355,628 380,600 395,583 412,570 425,588 440,583 460,580 470,562 480,568 495,542 515,540 530,525 548,515 560,530 590,525 615,525 625,502 637,500 650,518 665,522 678,505 700,525 720,545 745,550 780,537 800,545 820,540 845,560 870,555 890,555 910,545 930,540 950,550 985,547 995,515 1005,550 1015,578 1025,565 1045,595 1070,620 1080,605 1110,610 1130,635 1150,605 1165,610 1195,590 1215,608 1240,595 1260,605 1275,598 1285,575 1300,595 1315,618 1325,600 1345,605 1360,595 1385,605 1405,632 1425,625 1437,620",
    "2,658 20,660 35,678 50,655 70,630 85,605 110,605 120,620 128,597 160,600 165,587 180,605 205,603 210,560 225,545 240,530 265,528 280,522 295,490 305,475 325,468 360,475 375,455 390,445 410,442 440,443 450,475 480,462 490,472 495,448 515,440 530,455 560,455 570,458 590,438 625,422 640,432 660,425 675,412 690,402 720,405 740,395 760,392 780,385 795,405 805,410 815,432 835,415 860,408 865,385 895,382 905,362 920,358 935,370 950,377 985,368 1030,370 1048,355 1065,357 1070,312 1085,308 1105,288 1120,287 1142,272 1155,284 1195,283 1215,270 1235,271 1280,265 1300,265 1315,258 1325,270 1345,270 1365,255 1380,250"
  ],
  slow: [
    "62,717 170,720 300,730 400,740 520,750 620,756 700,764 800,776 900,788 1000,797 1100,807 1220,817 1300,829 1360,840 1440,851",
    "120,863 180,870 300,872 420,871 500,866 600,853 700,841 800,832 900,821 1000,804 1080,783 1140,768 1220,744 1300,716 1380,694 1440,681",
    "80,675 160,655 260,630 340,612 400,604 480,596 580,590 680,582 800,575 920,576 1060,576 1160,574 1260,568 1340,563 1440,556",
    "60,550 140,541 240,526 340,509 440,487 520,470 600,447 700,416 800,388 900,363 1000,345 1100,326 1200,311 1300,297 1380,287"
  ],
  fast: [
    "62,717 120,719 200,723 270,727 330,731 390,737 440,740 480,736 530,736 570,742 640,748 700,757 750,768 800,776 860,780 920,782 980,793 1040,803 1100,819 1160,829 1220,834 1280,837 1340,839 1440,840",
    "65,840 110,850 180,860 260,867 320,873 380,883 430,893 470,901 530,902 600,900 680,898 740,886 800,870 860,852 920,827 960,815 1010,792 1070,770 1140,755 1200,738 1260,722 1330,705 1380,688 1440,678",
    "90,673 160,656 230,640 300,623 380,600 460,584 540,564 620,550 680,543 740,540 800,544 860,551 920,559 1000,571 1080,582 1160,592 1240,603 1300,608 1360,612 1400,608 1440,600",
    "60,588 120,573 200,552 260,537 330,514 400,489 450,468 500,452 560,440 620,427 700,416 780,403 850,383 920,363 1000,345 1080,326 1160,304 1240,290 1300,276 1380,260"
  ],
  cycle: [
    "62,983 80,962 110,918 150,876 180,846 210,817 240,793 270,776 300,768 340,763 380,759 420,752 470,748 510,744 545,738 575,728 600,720 640,708 665,704 700,705 750,709 780,714 800,720 820,731 850,755 880,788 910,825 940,860 980,902 1020,950 1055,993 1080,1013 1105,1032 1130,1038 1155,1040 1185,1036 1215,1020 1240,995 1265,960 1290,918 1320,858 1350,790 1380,725 1410,660 1440,600",
    "90,545 120,497 150,464 175,451 200,451 225,464 250,487 275,520 300,568 325,635 350,710 375,788 400,868 430,962 460,1060 490,1155 525,1262 560,1350 590,1413 610,1441 635,1462 658,1467 685,1464 710,1446 735,1403 765,1342 800,1250 830,1160 860,1055 880,990 905,915 930,840 955,745 985,665 1010,600 1040,537 1070,485 1100,455 1125,445 1145,443 1165,446 1190,459 1220,487 1250,528 1280,580 1310,645 1340,725 1370,795 1400,862 1440,960",
    "90,1015 120,1060 150,1090 175,1108 200,1116 220,1118 245,1112 275,1090 305,1058 335,1020 360,975 390,910 420,850 450,775 480,695 510,625 545,560 580,505 610,453 640,412 670,387 700,372 730,367 760,371 790,386 820,414 850,450 880,500 920,568 960,650 1000,735 1040,830 1080,925 1120,1020 1160,1110 1200,1200 1240,1270 1280,1325 1310,1360 1340,1381 1365,1389 1400,1388 1420,1376 1440,1363",
    "20,1347 50,1310 80,1255 110,1185 140,1110 170,1045 200,955 230,870 260,800 290,720 320,650 350,590 380,545 410,513 440,492 470,483 495,484 520,496 550,526 580,574 615,640 650,705 690,785 730,870 770,940 810,1005 840,1040 870,1061 895,1071 930,1071 960,1060 990,1036 1020,1000 1050,960 1090,895 1130,835 1170,770 1210,715 1250,672 1290,642 1330,625 1355,621 1380,623"
  ],
  momentum: [
    "62,683 85,699 110,728 140,765 175,797 210,815 240,826 270,833 290,828 305,816 330,774 350,748 370,740 395,736 420,757 445,769 480,785 520,794 560,806 585,813 605,832 625,865 645,903 660,922 680,928 700,921 720,900 745,872 775,858 800,863 830,874 860,884 885,900 920,938 960,970 1000,1011 1040,1039 1063,1049 1085,1038 1110,998 1150,953 1185,905 1205,858 1220,795 1235,748 1260,685 1285,637 1310,607 1325,597 1350,603 1380,622 1400,652 1420,685 1440,705",
    "80,733 120,795 140,848 165,905 190,962 215,1022 240,1080 265,1122 290,1152 310,1185 330,1196 365,1198 400,1206 430,1215 460,1211 495,1216 520,1190 540,1162 560,1110 580,1058 600,985 620,915 640,870 665,822 690,768 715,705 740,650 765,580 790,500 810,450 830,405 845,382 870,369 890,372 910,380 925,396 942,428 960,447 985,470 1010,505 1035,545 1055,590 1080,635 1105,695 1130,755 1145,808 1165,850 1185,884 1215,913 1250,930 1280,945 1310,960 1345,962 1385,974 1410,972 1440,955",
    "85,925 110,893 140,868 180,846 210,815 240,770 270,735 300,690 330,632 355,605 380,590 410,586 440,587 465,583 485,579 515,590 545,615 575,645 600,688 630,755 660,812 690,890 715,937 740,967 770,1014 800,1068 825,1105 865,1139 900,1152 940,1153 1000,1154 1020,1165 1050,1187 1080,1200 1120,1196 1150,1199 1185,1207 1205,1200 1240,1158 1270,1110 1300,1045 1330,975 1350,922 1380,848 1410,785 1440,722",
    "30,670 55,630 80,601 120,583 170,564 210,548 240,544 300,545 335,537 345,541 370,567 400,602 430,640 460,695 490,770 520,835 555,910 580,968 605,1012 635,1050 655,1073 672,1075 700,1050 750,1010 785,960 820,900 855,848 890,795 930,752 965,708 990,689 1045,683 1090,690 1140,692 1195,691 1220,694 1240,708 1260,730 1290,775 1320,808 1355,832 1380,855"
  ]
};

const svg = document.getElementById("series");

function draw(name, className, attrs) {
  const el = document.createElementNS("http://www.w3.org/2000/svg", name);
  el.setAttribute("class", className);
  for (const key in attrs) el.setAttribute(key, attrs[key]);
  svg.appendChild(el);
}
function line(className, x1, y1, x2, y2) {
  draw("line", className, { x1, y1, x2, y2 });
}
function points(panels) {
  return panels.flatMap((panel, i) => panel.split(" ").map(pair => {
    const [x, y] = pair.split(",").map(Number);
    return [PANELS[i] + x / 3, (y - 13) / Y_STEP];
  }));
}
// Hourly prices move up and down between the stored turning points.
function hourly(pts) {
  const out = [];
  let n = 0;
  for (let i = 0; i < pts.length - 1; i++) {
    const [ax, ay] = pts[i], [bx, by] = pts[i + 1];
    const steps = Math.max(1, Math.round((bx - ax) / 2));
    for (let s = 0; s < steps; s++, n++) {
      const wobble = s ? Math.sin(n * 2.3) * 2 + Math.sin(n * 5.1) * 2 : 0;
      out.push([ax + (bx - ax) * s / steps, ay + (by - ay) * s / steps + wobble]);
    }
  }
  out.push(pts[pts.length - 1]);
  return out;
}
function curve(pts) {
  let d = "M" + pts[0];
  for (let i = 0; i < pts.length - 1; i++) {
    const p = pts[i - 1] || pts[i], a = pts[i], b = pts[i + 1], q = pts[i + 2] || b;
    d += `C${a[0] + (b[0] - p[0]) / 6},${a[1] + (b[1] - p[1]) / 6} ${b[0] - (q[0] - a[0]) / 6},${b[1] - (q[1] - a[1]) / 6} ${b}`;
  }
  return d;
}

const PITCH = 68.4;
for (let i = 1; i < 10; i++) line("grid-line", 0, i * 80.8, 1840, i * 80.8);
for (let i = 1; i < 27; i++) line("grid-line", i * PITCH, 0, i * PITCH, 808);
line("frame-top", 0, 0, 1840, 0);
line("axis", 0, 0, 0, 808);
line("axis", 0, 808, 1840, 808);
line("axis", 1840, 0, 1840, 808);
for (let i = 0; i <= 10; i++) line("axis", -4, i * 80.8, 3, i * 80.8);
for (let i = 0; i < 27; i++) line("axis", i * PITCH, 804, i * PITCH, 812);

draw("polyline", "oscillator", { points: points(DATA.oscillator).join(" ") });
draw("polyline", "price", { points: hourly(points(DATA.price)).join(" ") });
for (const name of ["slow", "fast", "cycle", "momentum"]) {
  draw("path", name, { d: curve(points(DATA[name])) });
}
draw("path", "level", { d: "M0 404H1840" });
line("target", 1277, 250, 1411, 250);
line("target", 1582, 797, 1789, 792);
```
